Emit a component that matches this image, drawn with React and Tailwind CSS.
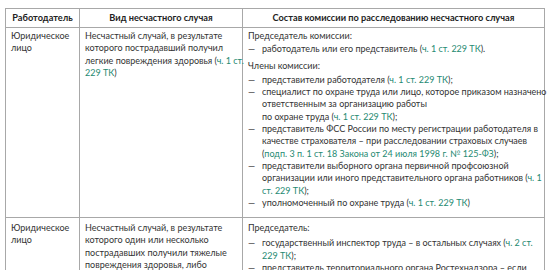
import React from "react";

const L = ({ children }) => <span className="text-[#1f8a72]">{children}</span>;

const Item = ({ children }) => (
  <div className="flex">
    <span className="w-[14px] shrink-0">—</span>
    <span className="whitespace-nowrap">{children}</span>
  </div>
);

export default function App() {
  return (
    <div
      className="w-[550px] h-[270px] overflow-hidden bg-white pt-[8px] pl-[5px] text-[#333] text-[9px] leading-[12.3px]"
      style={{ fontFamily: "Lato, 'Open Sans', sans-serif" }}
    >
      <div className="w-[540px] border border-[#a8a8a8]">
        <div className="grid grid-cols-[74px_163px_1fr] border-b border-[#a8a8a8] font-bold text-[#222] text-[9.2px]">
          <div className="border-r border-[#a8a8a8] h-[18px] flex items-center justify-center">Работодатель</div>
          <div className="border-r border-[#a8a8a8] h-[18px] flex items-center justify-center">Вид несчастного случая</div>
          <div className="h-[18px] flex items-center justify-center">Состав комиссии по расследованию несчастного случая</div>
        </div>
        <div className="grid grid-cols-[74px_163px_1fr] border-b border-[#a8a8a8]">
          <div className="border-r border-[#a8a8a8] px-[5px] pt-[2px] whitespace-nowrap">
            Юридическое<br />лицо
          </div>
          <div className="border-r border-[#a8a8a8] px-[5px] pt-[2px] whitespace-nowrap">
            Несчастный случай, в результате<br />
            которого пострадавший получил<br />
            легкие повреждения здоровья (<L>ч. 1 ст.</L>
            <br />
            <L>229 ТК</L>)
          </div>
          <div className="px-[5px] pt-[2px] pb-[8px]">
            <div>Председатель комиссии:</div>
            <div className="mt-[1px]">
              <Item>
                работодатель или его представитель (<L>ч. 1 ст. 229 ТК</L>).
              </Item>
            </div>
            <div className="mt-[4px]">Члены комиссии:</div>
            <div className="mt-[2px]">
              <Item>
                представители работодателя (<L>ч. 1 ст. 229 ТК</L>);
              </Item>
              <Item>
                специалист по охране труда или лицо, которое приказом назначено
                <br />
                ответственным за организацию работы
                <br />
                по охране труда (<L>ч. 1 ст. 229 ТК</L>);
              </Item>
              <Item>
                представитель ФСС России по месту регистрации работодателя в
                <br />
                качестве страхователя – при расследовании страховых случаев
                <br />(<L>подп. 3 п. 1 ст. 18 Закона от 24 июля 1998 г. № 125-ФЗ</L>);
              </Item>
              <Item>
                представители выборного органа первичной профсоюзной
                <br />
                организации или иного представительного органа работников (<L>ч. 1</L>
                <br />
                <L>ст. 229 ТК</L>);
              </Item>
              <Item>
                уполномоченный по охране труда (<L>ч. 1 ст. 229 ТК</L>)
              </Item>
            </div>
          </div>
        </div>
        <div className="grid grid-cols-[74px_163px_1fr]">
          <div className="border-r border-[#a8a8a8] px-[5px] pt-[4px] whitespace-nowrap">
            Юридическое<br />лицо
          </div>
          <div className="border-r border-[#a8a8a8] px-[5px] pt-[4px] whitespace-nowrap">
            Несчастный случай, в результате<br />
            которого один или несколько<br />
            пострадавших получили тяжелые<br />
            повреждения здоровья, либо<br />
            несчастный случай со смертельным<br />
            исходом
          </div>
          <div className="px-[5px] pt-[4px] pb-[7px]">
            <div>Председатель:</div>
            <div className="mt-[3px]">
              <Item>
                государственный инспектор труда – в остальных случаях (<L>ч. 2 ст.</L>
                <br />
                <L>229 ТК</L>);
              </Item>
              <Item>
                представитель территориального органа Ростехнадзора – если
                <br />
                несчастный случай произошел в организации или на объекте,
              </Item>
            </div>
          </div>
        </div>
      </div>
    </div>
  );
}
